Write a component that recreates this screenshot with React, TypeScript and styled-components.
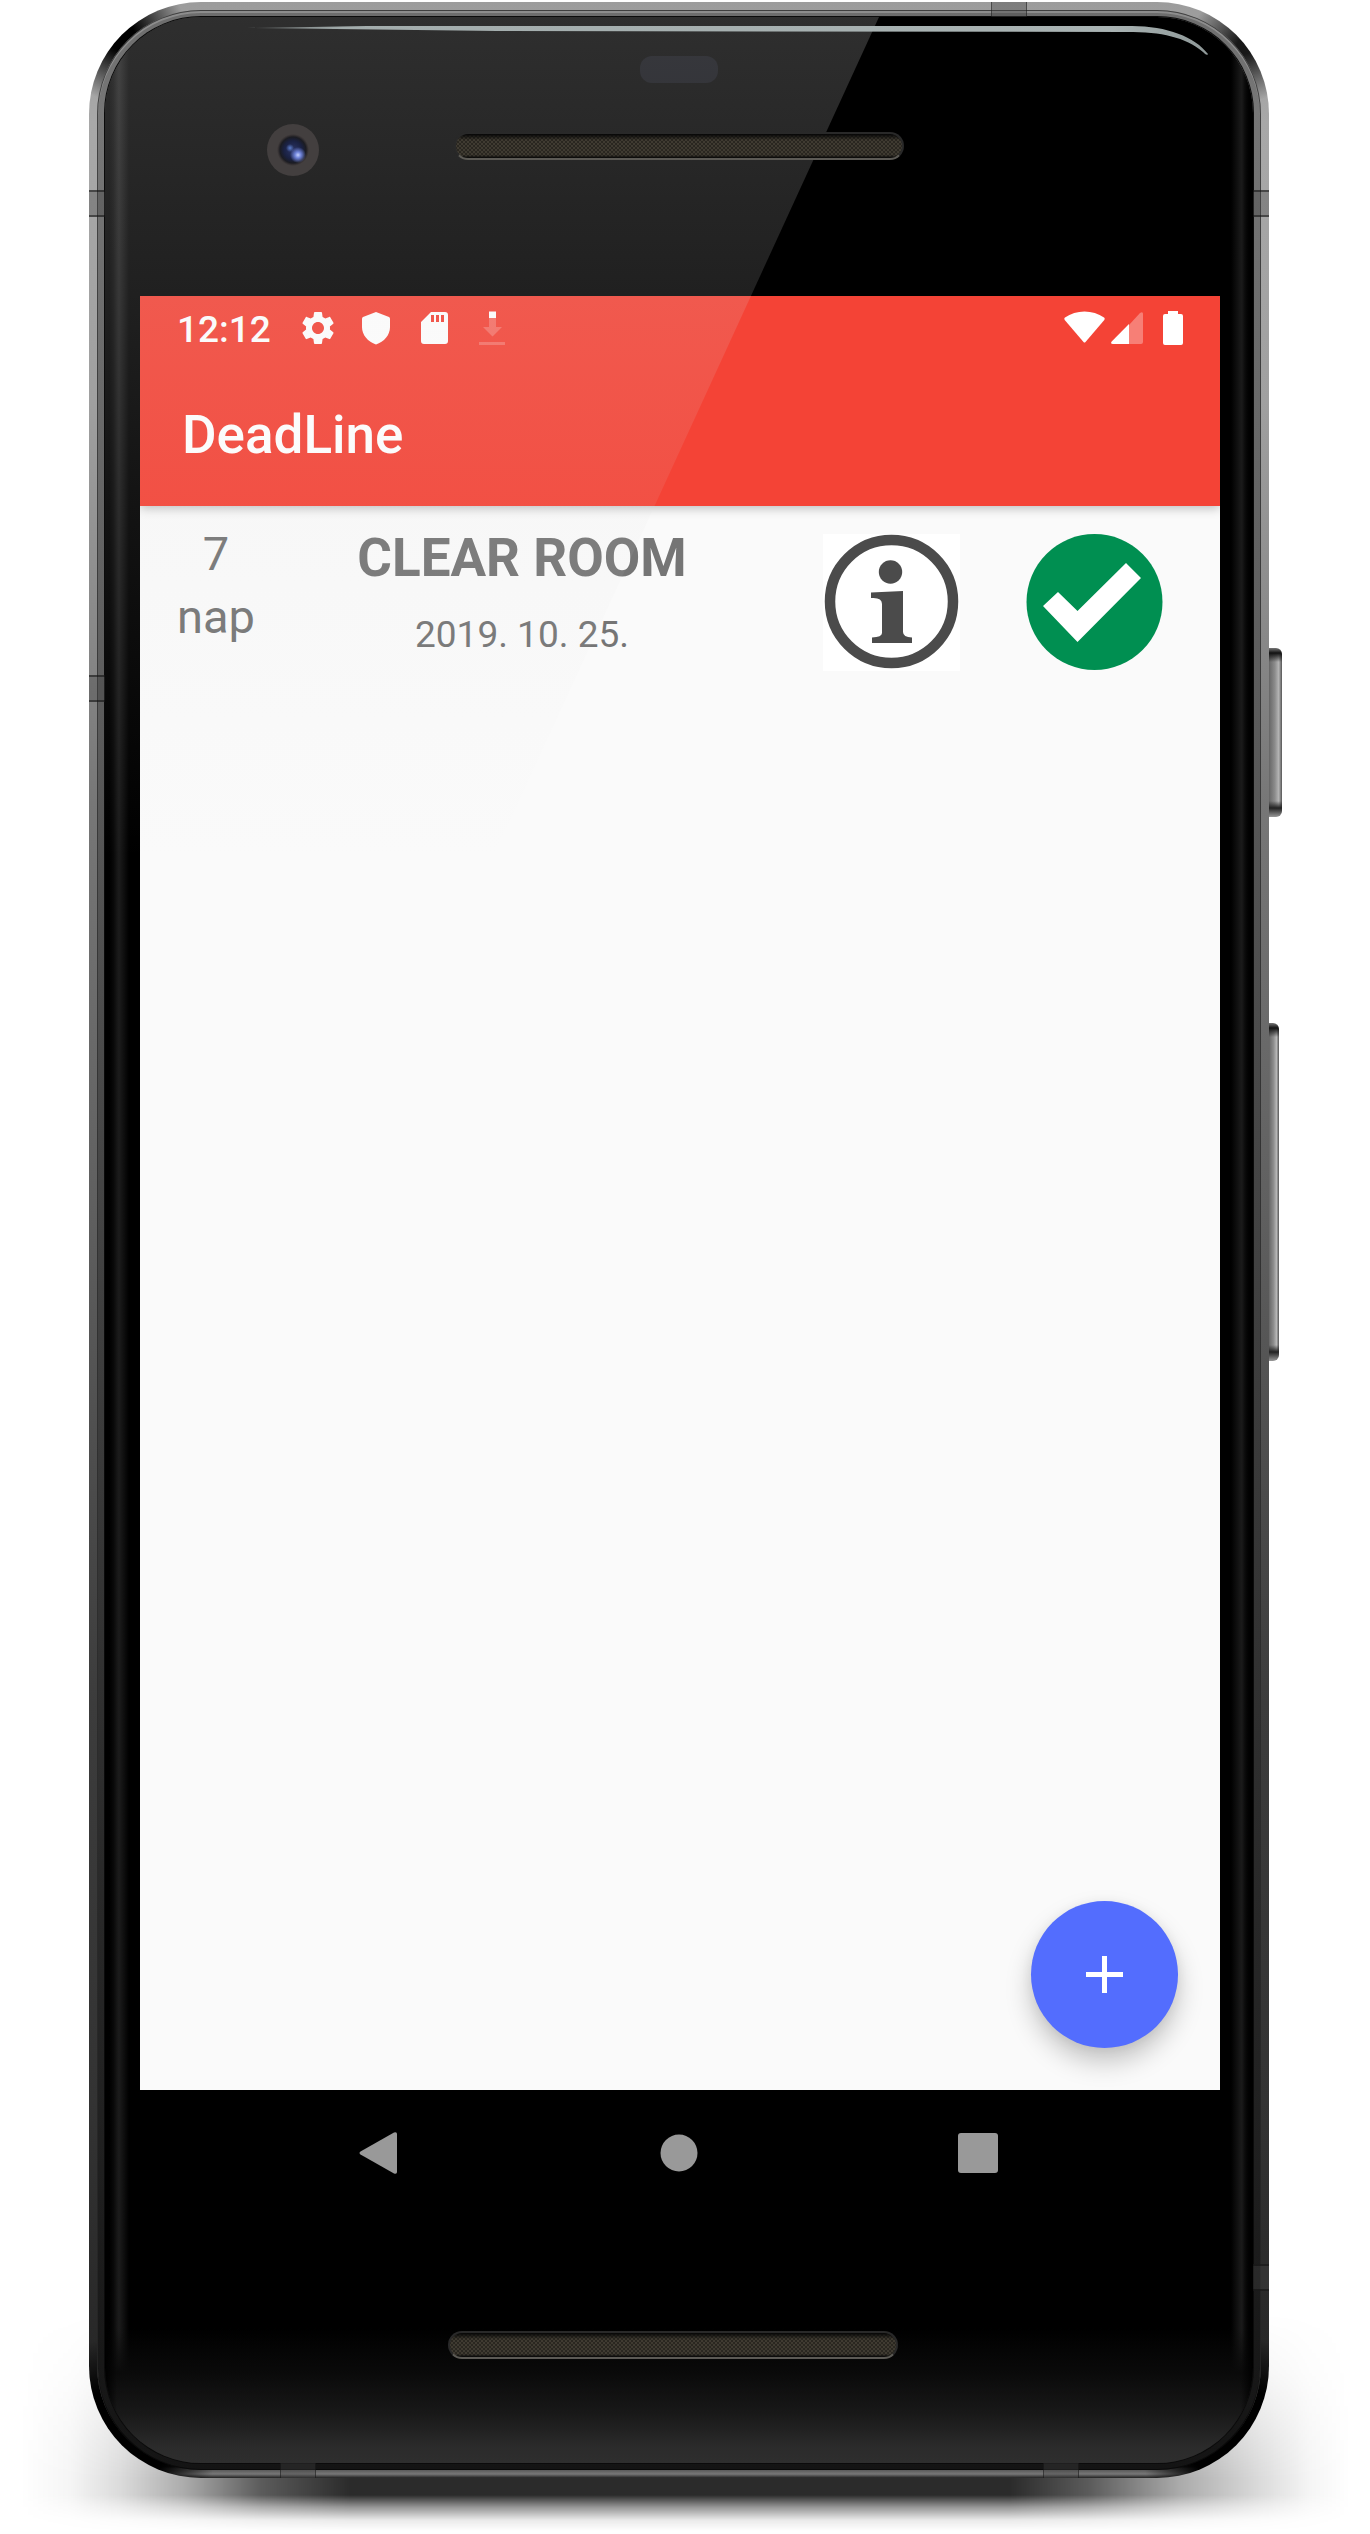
import React from "react";
import styled, { createGlobalStyle, css } from "styled-components";

const GlobalStyle = createGlobalStyle`
  *, *::before, *::after { box-sizing: border-box; }
  body {
    margin: 0;
    background: #ffffff;
    font-family: Roboto, "Liberation Sans", sans-serif;
  }
  button { margin: 0; padding: 0; border: 0; background: none; cursor: pointer; }
  h1, h2, p { margin: 0; }
  svg { display: block; }
`;

const Page = styled.div`
  position: relative;
  padding: 2px 101px 55px 89px;
  overflow: hidden;
`;

/* ---------- device body ---------- */

const GroundShadow = styled.div`
  position: absolute;
  left: 0;
  right: 0;
  bottom: 0;
  height: 220px;
  background: linear-gradient(
    90deg,
    transparent 20px,
    rgba(0, 0, 0, 0.04) 70px,
    rgba(0, 0, 0, 0.14) 120px,
    rgba(0, 0, 0, 0.33) 185px,
    rgba(0, 0, 0, 0.64) 260px,
    rgba(0, 0, 0, 0.83) 350px,
    rgba(0, 0, 0, 0.83) calc(100% - 360px),
    rgba(0, 0, 0, 0.64) calc(100% - 280px),
    rgba(0, 0, 0, 0.33) calc(100% - 190px),
    rgba(0, 0, 0, 0.14) calc(100% - 110px),
    rgba(0, 0, 0, 0.04) calc(100% - 60px),
    transparent calc(100% - 20px)
  );
  mask-image: linear-gradient(
    180deg,
    transparent 0,
    rgba(0, 0, 0, 0.25) 60px,
    rgba(0, 0, 0, 0.7) 120px,
    #000 165px,
    #000 182px,
    rgba(0, 0, 0, 0.5) 194px,
    rgba(0, 0, 0, 0.1) 207px,
    transparent 218px
  );
`;

const Phone = styled.div`
  position: relative;
`;

const Chassis = styled.div`
  position: relative;
  padding: 8px;
  border-radius: 112px;
  background:
    radial-gradient(circle at 32px 34px, #000 14px, transparent 66px),
    radial-gradient(circle at calc(100% - 24px) 44px, rgba(0, 0, 0, 0.85) 8px, transparent 56px),
    radial-gradient(circle at 30px calc(100% - 40px), #000 50px, transparent 100px),
    radial-gradient(circle at calc(100% - 30px) calc(100% - 40px), #000 50px, transparent 100px),
    linear-gradient(0deg, #222 0, #777 4px, #4c4c4c 10px, transparent 11px),
    linear-gradient(180deg, #9c9c9c 0, #a8a8a8 120px, #a0a0a0 400px, #777 800px, #606060 1200px, #3c3c3c 1700px, #333 2100px, #222 100%);
`;

const Rim = styled.div`
  padding: 7px 8px;
  border-radius: 104px;
  background: linear-gradient(180deg, #6d6d6d 0, #777 100px, #5c5c5c 700px, #484848 1100px, #2c2c2c 1800px, #141414 100%);
  box-shadow:
    inset 0 0 0 1px rgba(0, 0, 0, 0.55),
    inset 0 2px 0 1px rgba(215, 215, 215, 0.3);
`;

const Glass = styled.div`
  position: relative;
  display: flex;
  flex-direction: column;
  padding: 0 33px 0 35px;
  border-radius: 96px;
  overflow: hidden;
  background:
    linear-gradient(90deg, #000 0, transparent 12px calc(100% - 12px), #000 100%),
    linear-gradient(0deg, #2e2e2e 0, #2b2b2b 16px, #181818 50px, #0a0a0a 90px, transparent 135px),
    linear-gradient(90deg, #000 4px, #1c1c1c 14px, #000 24px, #000 calc(100% - 22px), #1c1c1c calc(100% - 11px), #000 calc(100% - 3px));
  box-shadow: 0 0 0 1px #0b0b0b;
`;

const Glare = styled.div`
  position: absolute;
  inset: 0 0 auto 0;
  height: 843px;
  border-radius: 96px 0 0 0;
  background: linear-gradient(
    180deg,
    rgba(220, 220, 220, 0.21) 0,
    rgba(220, 220, 220, 0.145) 279px,
    rgba(220, 220, 220, 0.085) 489px,
    transparent 100%
  );
  clip-path: polygon(0 0, 774px 0, 387px 843px, 0 843px);
  pointer-events: none;
`;

const EdgeShine = styled.svg`
  position: absolute;
  top: 8px;
  right: 45px;
  width: 961px;
  height: 32px;
  pointer-events: none;
`;

const Seam = styled.span<{ $side: "top" | "bottom" | "left" | "right"; $at: number }>`
  position: absolute;
  background: rgba(70, 70, 70, 0.35);
  ${({ $side, $at }) =>
    $side === "top" || $side === "bottom"
      ? css`
          ${$side}: 0;
          left: ${$at}px;
          width: 36px;
          height: 15px;
          border: solid rgba(10, 10, 10, 0.45);
          border-width: 0 1px;
        `
      : css`
          ${$side}: 0;
          top: ${$at}px;
          width: 16px;
          height: 27px;
          border: solid rgba(10, 10, 10, 0.5);
          border-width: 2px 0;
        `}
`;

const SideKey = styled.span<{ $top: number; $length: number; $depth: number }>`
  position: absolute;
  left: 100%;
  top: ${({ $top }) => $top}px;
  width: ${({ $depth }) => $depth}px;
  height: ${({ $length }) => $length}px;
  border-radius: 0 6px 6px 0;
  background:
    linear-gradient(180deg, #777 0, #111 5px, transparent 14px, transparent calc(100% - 16px), #222 calc(100% - 9px), #999 100%),
    linear-gradient(90deg, #666 0, #8c8c8c 45%, #b5b5b5 75%, #555 100%);
`;

/* ---------- bezels ---------- */

const TopBezel = styled.div`
  display: flex;
  flex-direction: column;
  gap: 41px;
  height: 279px;
  margin: 0 -33px 0 -35px;
  padding-top: 39px;
`;

const Sensor = styled.div`
  align-self: center;
  width: 78px;
  height: 27px;
  border-radius: 12px;
  background: #0c0d13;
`;

const EarpieceRow = styled.div`
  display: grid;
  grid-template-columns: 1fr minmax(0, 450px) 1fr;
  align-items: start;
`;

const Camera = styled.div`
  position: relative;
  z-index: 1;
  width: 52px;
  height: 52px;
  margin-left: 162px;
  border-radius: 50%;
  background:
    radial-gradient(circle at 31px 31px, #c3d0ff 0, #6f83d8 3px, transparent 8px),
    radial-gradient(circle at 23px 24px, #5b7cc9 0, transparent 4px),
    radial-gradient(circle, #2b3566 0, #1a2142 9px, #1b1c22 13px, #3a3536 15px, #433f3f 16px, #433f3f 100%);
`;

const Grille = styled.div`
  position: relative;
  z-index: 1;
  width: 100%;
  max-width: 450px;
  height: 28px;
  border: 2px solid #292929;
  border-bottom-color: #5c5a55;
  border-radius: 14px;
  background-color: #0b0a09;
  background-image:
    linear-gradient(180deg, #060606 0, transparent 6px calc(100% - 3px), #060606 100%),
    radial-gradient(circle, #5c5548 0, transparent 2px),
    radial-gradient(circle, #5c5548 0, transparent 2px);
  background-size: 100% 100%, 4px 4px, 4px 4px;
  background-position: 0 0, 0 0, 2px 2px;
`;

const EarpieceGrille = styled(Grille)`
  margin-top: 8px;
`;

const Chin = styled.div`
  display: flex;
  justify-content: center;
  height: 247px;
  padding: 115px 14px 0 0;
`;

/* ---------- app ---------- */

const Screen = styled.div`
  position: relative;
  display: flex;
  flex-direction: column;
  min-height: 1794px;
  background: #fafafa;
`;

const Header = styled.header`
  color: #ffffff;
  background: #f44336;
  box-shadow: 0 2px 10px rgba(0, 0, 0, 0.26);
`;

const StatusBar = styled.div`
  display: flex;
  align-items: center;
  justify-content: space-between;
  height: 63px;
  padding: 0 37px;
`;

const StatusGroup = styled.div<{ $gap: number }>`
  display: flex;
  align-items: center;
  gap: ${({ $gap }) => $gap}px;
`;

const Time = styled.time`
  padding: 4px 9px 0 0;
  font-size: 37px;
  font-weight: 500;
  line-height: 59px;
`;

const Battery = styled.svg`
  margin-left: 14px;
`;

const AppTitle = styled.h1`
  height: 147px;
  padding: 4px 42px 0;
  font-size: 53px;
  font-weight: 500;
  line-height: 144px;
`;

const TaskList = styled.ul`
  flex: 1;
  margin: 0;
  padding: 0;
  list-style: none;
`;

const TaskRow = styled.li`
  display: grid;
  grid-template-columns: 152px 1fr auto;
  padding: 16px 57px 16px 0;
  color: #757575;
  text-align: center;
`;

const DaysLeft = styled.p`
  display: flex;
  flex-direction: column;
  font-size: 47px;
  line-height: 63px;
`;

const TaskText = styled.div`
  display: flex;
  flex-direction: column;
  gap: 5px;
  padding-right: 71px;
  line-height: 72px;
`;

const TaskName = styled.h2`
  font-size: 53px;
  font-weight: 700;
`;

const TaskDate = styled.time`
  font-size: 37px;
`;

const TaskActions = styled.div`
  display: flex;
  gap: 66px;
  padding-top: 12px;
`;

const ActionButton = styled.button<{ $plate?: boolean }>`
  width: 137px;
  height: 137px;
  background: ${({ $plate }) => ($plate ? "#ffffff" : "transparent")};
`;

const AddButton = styled.button`
  position: absolute;
  right: 42px;
  bottom: 42px;
  display: grid;
  place-items: center;
  width: 147px;
  height: 147px;
  border-radius: 50%;
  background: #536dfe;
  box-shadow: 0 14px 26px rgba(0, 0, 0, 0.22), 0 2px 12px rgba(0, 0, 0, 0.06);
`;

const NavBar = styled.nav`
  display: flex;
  justify-content: center;
  gap: 199px;
  height: 126px;
  padding-right: 2px;
`;

const NavButton = styled.button`
  display: grid;
  place-items: center;
  width: 100px;
  color: #999999;
`;

/* ---------- icons ---------- */

const GearIcon = () => (
  <svg width="40" height="40" viewBox="0 0 24 24" fill="#fff" aria-hidden="true">
    <path d="M19.14 12.94c.04-.3.06-.61.06-.94 0-.32-.02-.64-.07-.94l2.03-1.58c.18-.14.23-.41.12-.61l-1.92-3.32c-.12-.22-.37-.29-.59-.22l-2.39.96c-.5-.38-1.03-.7-1.62-.94l-.36-2.54c-.04-.24-.24-.41-.48-.41h-3.84c-.24 0-.43.17-.47.41l-.36 2.54c-.59.24-1.13.57-1.62.94l-2.39-.96c-.22-.08-.47 0-.59.22L2.74 8.87c-.12.21-.08.47.12.61l2.03 1.58c-.05.3-.09.63-.09.94s.02.64.07.94l-2.03 1.58c-.18.14-.23.41-.12.61l1.92 3.32c.12.22.37.29.59.22l2.39-.96c.5.38 1.03.7 1.62.94l.36 2.54c.05.24.24.41.48.41h3.84c.24 0 .44-.17.47-.41l.36-2.54c.59-.24 1.13-.56 1.62-.94l2.39.96c.22.08.47 0 .59-.22l1.92-3.32c.12-.22.07-.47-.12-.61l-2.01-1.58zM12 15.6c-1.98 0-3.6-1.62-3.6-3.6s1.62-3.6 3.6-3.6 3.6 1.62 3.6 3.6-1.62 3.6-3.6 3.6z" />
  </svg>
);

const ShieldIcon = () => (
  <svg width="40" height="40" viewBox="0 0 40 40" fill="#fff" aria-hidden="true">
    <path d="M20 4 L33 9 Q34 9.500 34 11 V19 C34 27 28 34 20 36.500 C12 34 6 27 6 19 V11 Q6 9.500 7 9 Z" />
  </svg>
);

const SdCardIcon = () => (
  <svg width="40" height="40" viewBox="0 0 40 40" fill="#fff" fillRule="evenodd" aria-hidden="true">
    <path d="M17 4 H31 Q34 4 34 7 V33 Q34 36 31 36 H10 Q7 36 7 33 V14 Z M17 7 V14 H20 V7 Z M22 7 V14 H25 V7 Z M27 7 V14 H30 V7 Z" />
  </svg>
);

const DownloadIcon = () => (
  <svg width="40" height="40" viewBox="0 0 40 40" fill="#fff" aria-hidden="true">
    <path d="M17 3.500 H24 V10 H17 Z" />
    <path opacity=".22" d="M17 10 H24 V19 H30 L20.500 28.500 L11 19 H17 Z M7 34 H33 V37 H7 Z" />
  </svg>
);

const WifiIcon = () => (
  <svg width="41" height="34" viewBox="0 0 41 34" fill="#fff" aria-hidden="true">
    <path d="M1 6.500 C12 -1.500 29 -1.500 40 6.500 Q41.200 7.500 40.300 9 L21.500 31 Q20.500 32 19.500 31 L.7 9 Q-.2 7.500 1 6.500 Z" />
  </svg>
);

const SignalIcon = () => (
  <svg width="32" height="32" viewBox="0 0 32 32" fill="#fff" aria-hidden="true">
    <path opacity=".32" d="M18 13 L29 1 Q32 -1 32 2 V30 Q32 32 30 32 H18 Z" />
    <path d="M18 12 V32 H2 Q-1 32 .7 29.500 Z" />
  </svg>
);

const BatteryIcon = () => (
  <Battery width="20" height="34" viewBox="0 0 20 34" fill="#fff" aria-hidden="true">
    <path d="M5 0 H15 V3 H18 Q20 3 20 5 V32 Q20 34 18 34 H2 Q0 34 0 32 V5 Q0 3 2 3 H5 Z" />
  </Battery>
);

const InfoIcon = () => (
  <svg width="137" height="137" viewBox="0 0 137 137" aria-hidden="true">
    <circle cx="68.500" cy="67.500" r="61.500" fill="none" stroke="#4b4b4b" strokeWidth="10.500" />
    <circle cx="67.500" cy="38" r="11.700" fill="#4b4b4b" />
    <path fill="#4b4b4b" d="M48 58.500 L80 57 V98 Q80 103 89 103.500 V109 H49 V103.500 Q59 103 59 99 V70 Q59 63 48 64 Z" />
  </svg>
);

const DoneIcon = () => (
  <svg width="137" height="137" viewBox="0 0 137 137" aria-hidden="true">
    <circle cx="68.500" cy="68" r="68" fill="#008f51" />
    <path fill="#fff" d="M17 72 L32 58 L51.500 77 L100 29 L115 44 L51.500 108 Z" />
  </svg>
);

/* ---------- view ---------- */

const tasks = [{ days: 7, unit: "nap", name: "CLEAR ROOM", date: "2019. 10. 25.", iso: "2019-10-25" }];

export default function App() {
  return (
    <>
      <GlobalStyle />
      <Page>
        <GroundShadow />
        <Phone>
          <SideKey $top={646} $length={169} $depth={13} />
          <SideKey $top={1021} $length={338} $depth={10} />
          <Chassis>
            <Rim>
              <Glass>
                <TopBezel>
                  <Sensor />
                  <EarpieceRow>
                    <Camera />
                    <EarpieceGrille />
                  </EarpieceRow>
                </TopBezel>

                <Screen>
                  <Header>
                    <StatusBar>
                      <StatusGroup $gap={18}>
                        <Time>12:12</Time>
                        <GearIcon />
                        <ShieldIcon />
                        <SdCardIcon />
                        <DownloadIcon />
                      </StatusGroup>
                      <StatusGroup $gap={6}>
                        <WifiIcon />
                        <SignalIcon />
                        <BatteryIcon />
                      </StatusGroup>
                    </StatusBar>
                    <AppTitle>DeadLine</AppTitle>
                  </Header>

                  <TaskList>
                    {tasks.map((task) => (
                      <TaskRow key={task.name}>
                        <DaysLeft>
                          <span>{task.days}</span>
                          <span>{task.unit}</span>
                        </DaysLeft>
                        <TaskText>
                          <TaskName>{task.name}</TaskName>
                          <TaskDate dateTime={task.iso}>{task.date}</TaskDate>
                        </TaskText>
                        <TaskActions>
                          <ActionButton $plate type="button" aria-label="Info">
                            <InfoIcon />
                          </ActionButton>
                          <ActionButton type="button" aria-label="Done">
                            <DoneIcon />
                          </ActionButton>
                        </TaskActions>
                      </TaskRow>
                    ))}
                  </TaskList>

                  <AddButton type="button" aria-label="Add">
                    <svg width="37" height="37" viewBox="0 0 37 37" fill="#fff" aria-hidden="true">
                      <path d="M16 0 H21 V16 H37 V21 H21 V37 H16 V21 H0 V16 H16 Z" />
                    </svg>
                  </AddButton>
                </Screen>

                <NavBar>
                  <NavButton type="button" aria-label="Back">
                    <svg width="42" height="42" viewBox="0 0 42 42" fill="currentColor" aria-hidden="true">
                      <path d="M1.500 19.500 L35 .5 Q38 -.5 38 2 V40 Q38 42.500 35 41.500 L1.500 22.500 Q-.5 21 1.500 19.500 Z" />
                    </svg>
                  </NavButton>
                  <NavButton type="button" aria-label="Home">
                    <svg width="38" height="38" viewBox="0 0 38 38" fill="currentColor" aria-hidden="true">
                      <circle cx="19" cy="19" r="18.500" />
                    </svg>
                  </NavButton>
                  <NavButton type="button" aria-label="Overview">
                    <svg width="40" height="40" viewBox="0 0 40 40" fill="currentColor" aria-hidden="true">
                      <rect width="40" height="40" rx="3" />
                    </svg>
                  </NavButton>
                </NavBar>

                <Chin>
                  <Grille />
                </Chin>

                <Glare />
                <EdgeShine viewBox="0 0 961 32" aria-hidden="true">
                  <defs>
                    <linearGradient id="shine" x1="0" x2="1" y1="0" y2="0">
                      <stop offset="0" stopColor="#9aa3a3" stopOpacity=".5" />
                      <stop offset=".1" stopColor="#a3adad" />
                      <stop offset=".9" stopColor="#a9b3b3" />
                      <stop offset="1" stopColor="#8f9999" />
                    </linearGradient>
                  </defs>
                  <path
                    fill="url(#shine)"
                    d="M0 3 L120 1 H885 C920 1 948 12 961 29 C960 31 958 29 956 27 C938 12 915 7 880 7 L250 6 Z"
                  />
                </EdgeShine>
              </Glass>
            </Rim>
          </Chassis>
          <Seam $side="top" $at={902} />
          <Seam $side="left" $at={188} />
          <Seam $side="right" $at={188} />
          <Seam $side="left" $at={673} />
          <Seam $side="right" $at={2262} />
          <Seam $side="bottom" $at={191} />
          <Seam $side="bottom" $at={954} />
        </Phone>
      </Page>
    </>
  );
}
